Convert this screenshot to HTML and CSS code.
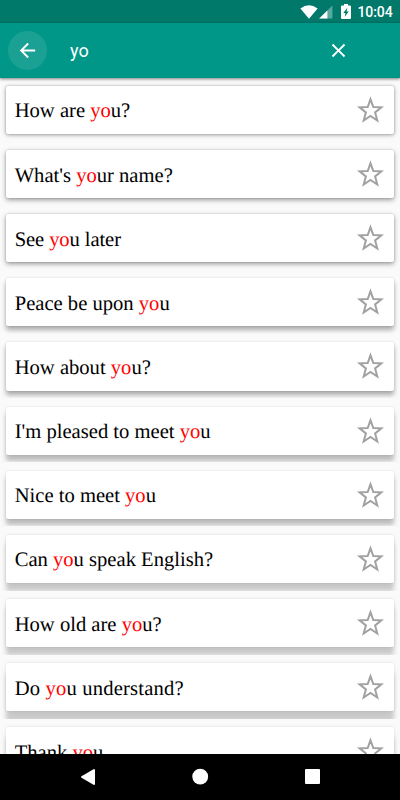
FILE: index.html
```
<!DOCTYPE html>
<html lang="en">
<head>
<meta charset="utf-8">
<title>Phrases</title>
<link rel="stylesheet" href="styles.css">
</head>
<body>
<svg class="defs" width="0" height="0"><symbol id="star" viewBox="0 0 28 28"><path d="M14.500 3.300L17.300 11 25.400 11.300 19.100 16.400 21.300 24.500 14.500 19.900 7.700 24.500 9.900 16.400 3.600 11.300 11.700 11z"/></symbol></svg>
<div class="status">
  <svg class="wifi" width="18" height="14" viewBox="0 0 18 14"><path d="M.4 3.4Q9-2.9 17.6 3.4L9 13.8z" fill="#fff"/></svg>
  <svg class="signal" width="14" height="14" viewBox="0 0 14 14"><path d="M13.4.5v13H.2z" fill="#5aa9a0"/><path d="M8.4 5.4v8.1H.2z" fill="#fff"/></svg>
  <svg class="battery" width="10" height="15" viewBox="0 0 10 15"><path d="M3 0h4v1.5h2q1 0 1 1V14q0 1-1 1H1q-1 0-1-1V2.500q0-1 1-1h2z" fill="#fff"/><path d="M6.300 3.700L2.300 8.900h2.100L3.800 12.700 7.700 7.500H5.600z" fill="#00796b"/></svg>
  <span class="time">10:04</span>
</div>
<header class="bar">
  <span class="back"><svg width="24" height="24" viewBox="0 0 24 24"><path d="M20 11H7.830l5.590-5.590L12 4l-8 8 8 8 1.410-1.410L7.830 13H20z" fill="#fff"/></svg></span>
  <span class="query">yo</span>
  <svg class="clear" width="23" height="23" viewBox="0 0 24 24"><path d="M19 6.410L17.590 5 12 10.590 6.410 5 5 6.410 10.590 12 5 17.590 6.410 19 12 13.410 17.590 19 19 17.590 13.410 12z" fill="#fff"/></svg>
</header>
<main class="list">
  <div class="row"><div class="card"><span>How are <b>yo</b>u?</span><svg class="star"><use href="#star"/></svg></div></div>
  <div class="row"><div class="card"><span>What's <b>yo</b>ur name?</span><svg class="star"><use href="#star"/></svg></div></div>
  <div class="row"><div class="card"><span>See <b>yo</b>u later</span><svg class="star"><use href="#star"/></svg></div></div>
  <div class="row"><div class="card"><span>Peace be upon <b>yo</b>u</span><svg class="star"><use href="#star"/></svg></div></div>
  <div class="row"><div class="card"><span>How about <b>yo</b>u?</span><svg class="star"><use href="#star"/></svg></div></div>
  <div class="row"><div class="card"><span>I'm pleased to meet <b>yo</b>u</span><svg class="star"><use href="#star"/></svg></div></div>
  <div class="row"><div class="card"><span>Nice to meet <b>yo</b>u</span><svg class="star"><use href="#star"/></svg></div></div>
  <div class="row"><div class="card"><span>Can <b>yo</b>u speak English?</span><svg class="star"><use href="#star"/></svg></div></div>
  <div class="row"><div class="card"><span>How old are <b>yo</b>u?</span><svg class="star"><use href="#star"/></svg></div></div>
  <div class="row"><div class="card"><span>Do <b>yo</b>u understand?</span><svg class="star"><use href="#star"/></svg></div></div>
  <div class="row"><div class="card"><span>Thank <b>yo</b>u</span><svg class="star"><use href="#star"/></svg></div></div>
</main>
<nav class="nav">
  <svg width="16" height="18" viewBox="0 0 16 18"><path d="M14 2v14L2 9z" fill="#fff" stroke="#fff" stroke-width="2" stroke-linejoin="round"/></svg>
  <svg width="16" height="16" viewBox="0 0 16 16"><circle cx="7.200" cy="7.700" r="7.900" fill="#fff"/></svg>
  <svg width="15" height="15" viewBox="0 0 15 15"><rect width="15" height="15" rx="1" fill="#fff"/></svg>
</nav>
</body>
</html>
```
FILE: styles.css
```
* { box-sizing: border-box; }
body {
  margin: 0;
  width: 400px;
  height: 800px;
  display: flex;
  flex-direction: column;
  overflow: hidden;
  background: #fafafa;
}
svg { display: block; flex: none; overflow: visible; }
.defs { display: none; }
.status {
  flex: none;
  height: 23px;
  display: flex;
  align-items: center;
  justify-content: flex-end;
  padding-right: 7.5px;
  background: #00796b;
  color: #fff;
}
.wifi { margin-right: 1px; }
.battery { margin-left: 8px; }
.time {
  margin-left: 6px;
  font: 500 14px/23px Roboto, sans-serif;
  letter-spacing: -.1px;
  padding-top: 1px;
}
.bar {
  flex: none;
  position: relative;
  z-index: 1;
  height: 54.5px;
  display: flex;
  align-items: center;
  padding: 0 50px 0 8px;
  background: #009688;
  box-shadow: 0 1px 3px rgba(0, 0, 0, .5);
}
.back {
  width: 39px;
  height: 39px;
  border-radius: 50%;
  background: #1aa193;
  display: grid;
  place-items: center;
}
.back svg { width: 23px; height: 23px; }
.query {
  margin-left: 23px;
  flex: 1;
  padding-top: 1px;
  font: 18px/24px Roboto, sans-serif;
  color: #fff;
}
.list {
  flex: 1;
  min-height: 0;
  overflow: hidden;
}
.row {
  height: 64.15px;
  padding: 8.300px 5.700px 0;
  overflow: hidden;
}
.card {
  height: 48.2px;
  display: flex;
  align-items: center;
  justify-content: space-between;
  padding: 0 10px 0 9px;
  border-radius: 2px;
  background: #fff;
  font: 20.6px/24px "Liberation Serif", serif;
  text-rendering: geometricPrecision;
  color: #000;
  box-shadow: 0 1px 4px rgba(0, 0, 0, .36), 0 0 2px rgba(0, 0, 0, .2);
}
.card span { padding-top: 3px; }
.card b { font-weight: 400; color: #f00; }
.row:nth-child(n+2) .card { box-shadow: 0 2px 5px rgba(0, 0, 0, .38), 0 0 2px rgba(0, 0, 0, .18); }
.row:nth-child(n+4) .card { box-shadow: 0 4px 5px rgba(0, 0, 0, .32), 0 0 2px rgba(0, 0, 0, .16); }
.row:nth-child(n+6) .card { box-shadow: 0 6px 5px rgba(0, 0, 0, .25), 0 0 2px rgba(0, 0, 0, .14); }
.row:nth-child(n+8) .card { box-shadow: 0 8px 5px rgba(0, 0, 0, .2), 0 0 3px rgba(0, 0, 0, .14); }
.row:nth-child(n+10) .card { box-shadow: 0 10px 5px rgba(0, 0, 0, .2), 0 0 3px rgba(0, 0, 0, .12); }
.row:nth-child(3) .card { letter-spacing: -.1px; }
.row:nth-child(10) .card { letter-spacing: .18px; }
.star {
  width: 28px;
  height: 28px;
  fill: none;
  stroke: #a3a0a0;
  stroke-width: 2px;
}
.nav {
  flex: none;
  height: 46.5px;
  display: flex;
  align-items: center;
  justify-content: space-between;
  padding: 0 80px;
  background: #000;
}
```
